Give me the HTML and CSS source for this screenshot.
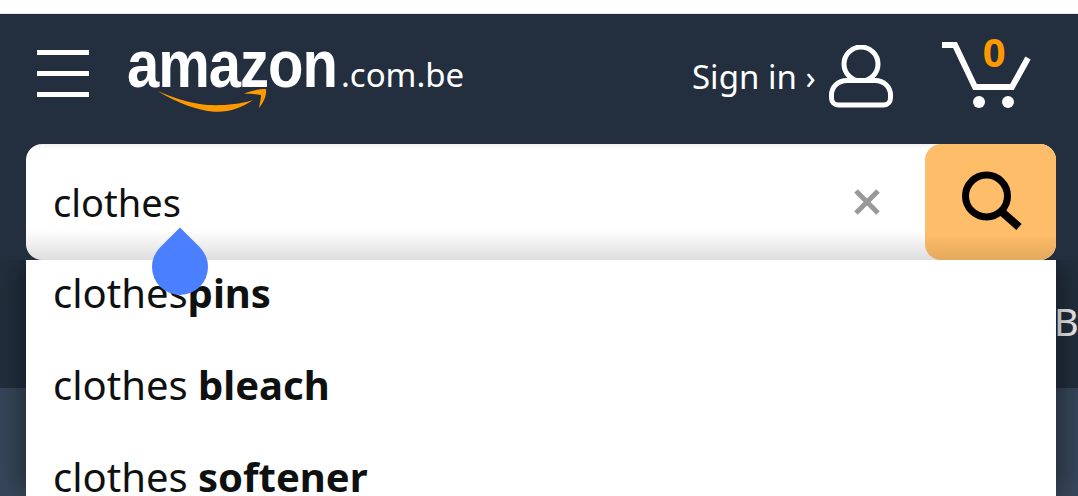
FILE: index.html
```html
<!DOCTYPE html>
<html lang="en">
<head>
    <meta charset="UTF-8">
    <meta name="viewport" content="width=device-width, initial-scale=1.0">
    <title>Amazon.com.be</title>
    <link rel="stylesheet" href="styles.css">
</head>
<body>

    <div class="status-strip"></div>

    <div class="top-area">
        <div class="header">
            <div class="menu-icon">
                <span></span>
                <span></span>
                <span></span>
            </div>
            <div class="logo">
                <span class="logo-word">amazon</span>
                <span class="logo-domain">.com.be</span>
                <svg class="logo-smile" width="112" height="26" viewBox="0 0 112 26" fill="#ff9900">
                    <path d="M0.5 3 C20 15 40 22 55 23.5 C70 25 85 20 96 12 C80 17 65 17.5 50 17 C30 15 15 9 0.5 3 Z"/>
                    <path d="M87 5.5 C95 2.5 102 1 109 1 C110 8 106 15 102 20 C103 14 104 10 104 7 C98 6 92 6 87 5.5 Z"/>
                </svg>
            </div>
            <div class="account">
                <span class="sign-in">Sign in ›</span>
                <svg width="64" height="64" viewBox="0 0 64 64" fill="none" stroke="#fff" stroke-width="5">
                    <circle cx="32" cy="19" r="17"/>
                    <path d="M18 35.5 H46 C55 35.5 61.5 42 61.5 50 V53 C61.5 57 58.5 60 54.5 60 H9.5 C5.5 60 2.5 57 2.5 53 V50 C2.5 42 9 35.5 18 35.5 Z" fill="#232f3e"/>
                </svg>
            </div>
            <div class="cart">
                <svg width="92" height="70" viewBox="0 0 92 70">
                    <path d="M0 5 H13 L33 47 H70 L86 18" fill="none" stroke="#fff" stroke-width="6"/>
                    <circle cx="37" cy="62" r="6" fill="#fff"/>
                    <circle cx="66" cy="62" r="6" fill="#fff"/>
                </svg>
                <span class="cart-count">0</span>
            </div>
        </div>

        <div class="search-box">
            <span class="search-text">clothes</span>
            <svg class="clear-icon" width="28" height="28" viewBox="0 0 28 28">
                <path d="M3 3 L25 25 M25 3 L3 25" stroke="#999" stroke-width="5"/>
            </svg>
            <div class="search-button">
                <svg width="64" height="64" viewBox="0 0 64 64" fill="none" stroke="#000" stroke-width="7">
                    <circle cx="27.5" cy="26" r="21"/>
                    <path d="M43 42 L60 57" stroke-width="8"/>
                </svg>
            </div>
        </div>

        <div class="behind-row">B</div>
    </div>

    <div class="lower-area"></div>

    <ul class="suggestions">
        <li>clothes<b>pins</b></li>
        <li>clothes <b>bleach</b></li>
        <li>clothes <b>softener</b></li>
    </ul>

    <div class="cursor-handle"></div>

</body>
</html>
```

FILE: styles.css
```css
html, body {
    margin: 0;
    height: 496px;
    overflow: hidden;
}
body {
    position: relative;
    background-color: #fff;
    font-family: "Noto Sans", sans-serif;
}
.status-strip {
    height: 13px;
    background-color: #fff;
    border-bottom: 1px solid #e6e6e6;
}
.top-area {
    height: 374px;
    background-color: #232f3e;
}
.lower-area {
    height: 108px;
    background-color: #37475a;
}
.header {
    display: flex;
    align-items: flex-start;
    height: 130px;
    padding-left: 37px;
    box-sizing: border-box;
}
.menu-icon {
    display: flex;
    flex-direction: column;
    gap: 16px;
    width: 52px;
    margin-top: 36px;
}
.menu-icon span {
    display: block;
    height: 5px;
    background-color: #fff;
}
.logo {
    position: relative;
    display: flex;
    align-items: baseline;
    margin-left: 38px;
    margin-top: 17px;
    width: 565px;
    color: #fff;
}
.logo-word {
    display: inline-block;
    font-family: "Liberation Sans", sans-serif;
    font-weight: bold;
    font-size: 58px;
    line-height: 72px;
    letter-spacing: -1px;
    transform: scaleY(1.14);
    transform-origin: 50% 76%;
}
.logo-domain {
    font-size: 33px;
    margin-left: 4px;
}
.logo-smile {
    position: absolute;
    left: 30px;
    top: 57px;
}
.account {
    display: flex;
    align-items: center;
    color: #fff;
    margin-top: 31px;
}
.sign-in {
    font-size: 33px;
    line-height: 64px;
    margin-right: 13px;
}
.cart {
    position: relative;
    margin-left: 49px;
    margin-top: 26px;
    height: 70px;
}
.cart-count {
    position: absolute;
    left: 41px;
    top: -12px;
    color: #ff9900;
    font-size: 40px;
    font-weight: bold;
    line-height: 48px;
}
.search-box {
    display: flex;
    align-items: center;
    height: 116px;
    margin: 0 22px 0 26px;
    border-radius: 16px;
    background: linear-gradient(to bottom, #f0f0f0 0, #fff 5px, #fff 74%, #dedede 100%);
}
.search-text {
    flex: 1;
    padding-left: 27px;
    font-size: 38px;
    color: #0f1111;
}
.clear-icon {
    margin-right: 44px;
}
.search-button {
    display: flex;
    align-items: center;
    justify-content: center;
    width: 131px;
    height: 116px;
    border-radius: 16px;
    background: linear-gradient(to bottom, #febd69 0, #febd69 78%, #e4a95d 100%);
}
.behind-row {
    padding: 36px 0 0 1054px;
    color: #eee;
    font-size: 38px;
    line-height: 50px;
    white-space: nowrap;
}
.suggestions {
    position: absolute;
    left: 26px;
    top: 260px;
    width: 1030px;
    height: 236px;
    box-sizing: border-box;
    display: flex;
    flex-direction: column;
    gap: 55px;
    margin: 0;
    padding: 14px 0 0 27px;
    list-style: none;
    background-color: #fff;
    box-shadow: -14px 0 24px -4px rgba(0, 0, 0, 0.3), 14px 0 24px -4px rgba(0, 0, 0, 0.3);
    clip-path: inset(0 -60px 0 -60px);
    color: #0f1111;
}
.suggestions li {
    font-size: 40px;
    line-height: 37px;
}
.suggestions b {
    font-weight: bold;
}
.cursor-handle {
    position: absolute;
    left: 152px;
    top: 239px;
    width: 56px;
    height: 56px;
    background-color: #4a7fff;
    border-radius: 50% 0 50% 50%;
    transform: rotate(-45deg);
}
```
